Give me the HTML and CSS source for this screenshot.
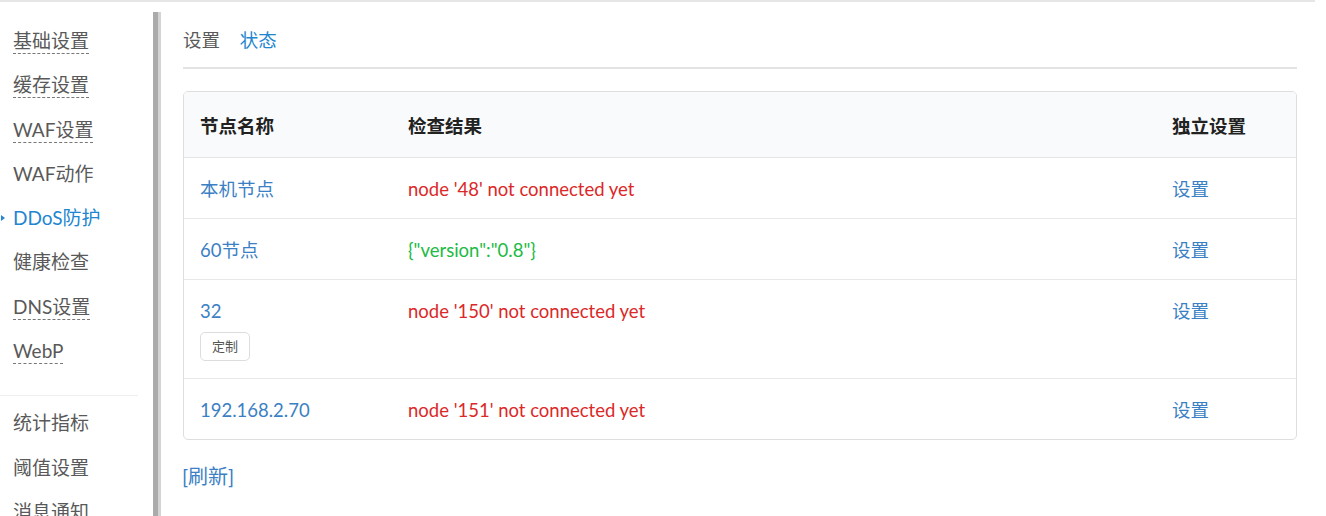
FILE: index.html
```html
<!doctype html>
<html>
<head>
<meta charset="utf-8">
<link rel="stylesheet" href="styles.css">
<title>DDoS防护 - 状态</title>
</head>
<body>
<div class="topline"></div>
<div class="layout">
  <div class="sidebar">
    <ul class="menu">
      <li><span class="dashed">基础设置</span></li>
      <li><span class="dashed">缓存设置</span></li>
      <li><span class="dashed">WAF设置</span></li>
      <li><span>WAF动作</span></li>
      <li class="active"><span>DDoS防护</span></li>
      <li><span>健康检查</span></li>
      <li><span class="dashed">DNS设置</span></li>
      <li><span class="dashed">WebP</span></li>
    </ul>
    <div class="menu-divider"></div>
    <ul class="menu">
      <li><span>统计指标</span></li>
      <li><span>阈值设置</span></li>
      <li><span>消息通知</span></li>
    </ul>
  </div>
  <div class="scroll-bar"></div>
  <div class="main">
    <div class="tabs">
      <a class="tab">设置</a>
      <a class="tab active">状态</a>
    </div>
    <table class="nodes">
      <thead>
        <tr>
          <th class="col-name">节点名称</th>
          <th>检查结果</th>
          <th class="col-op">独立设置</th>
        </tr>
      </thead>
      <tbody>
        <tr>
          <td><a class="link">本机节点</a></td>
          <td><span class="red">node '48' not connected yet</span></td>
          <td><a class="link">设置</a></td>
        </tr>
        <tr>
          <td><a class="link">60节点</a></td>
          <td><span class="green">{"version":"0.8"}</span></td>
          <td><a class="link">设置</a></td>
        </tr>
        <tr>
          <td><a class="link">32</a><span class="label">定制</span></td>
          <td><span class="red">node '150' not connected yet</span></td>
          <td><a class="link">设置</a></td>
        </tr>
        <tr>
          <td><a class="link">192.168.2.70</a></td>
          <td><span class="red">node '151' not connected yet</span></td>
          <td><a class="link">设置</a></td>
        </tr>
      </tbody>
    </table>
    <a class="refresh">[刷新]</a>
  </div>
</div>
</body>
</html>
```

FILE: styles.css
```css
body {
    margin: 0;
    font-family: Lato, "Noto Sans CJK SC", sans-serif;
    font-size: 18.5px;
    color: #555;
    background: white;
    overflow: hidden;
}
ul {
    list-style: none;
    margin: 0;
    padding: 0;
}
a {
    cursor: pointer;
}
.topline {
    width: 1315px;
    border-top: 2px solid #e6e6e6;
}
.layout {
    display: flex;
    align-items: flex-start;
}

/* sidebar */
.sidebar {
    width: 153px;
    padding-top: 17px;
}
.menu li {
    position: relative;
    height: 44.3px;
    line-height: 44px;
    padding-left: 13px;
    font-size: 19px;
    color: #595959;
    white-space: nowrap;
}
.menu .dashed {
    border-bottom: 1px dashed #777;
    padding-bottom: 1px;
}
.menu li.active {
    color: #2185d0;
}
.menu li.active:before {
    content: "";
    position: absolute;
    left: 1px;
    top: 19px;
    border-left: 4px solid #2185d0;
    border-top: 3px solid transparent;
    border-bottom: 3px solid transparent;
}
.menu-divider {
    width: 138px;
    border-top: 1px solid #eee;
    margin: 22px 0 5px;
}
.scroll-bar {
    width: 5px;
    height: 520px;
    margin-top: 10px;
    background: #ababab;
    border-right: 3px solid #d4d4d4;
}

/* main */
.main {
    width: 1114px;
    padding-left: 22px;
}
.tabs {
    padding-top: 26px;
    padding-bottom: 15px;
    border-bottom: 2px solid #e3e3e3;
    line-height: 24px;
}
.tab {
    color: #5a5a5a;
    margin-right: 15px;
}
.tab.active {
    color: #2185d0;
}
table.nodes {
    width: 100%;
    margin-top: 22px;
    border: 1px solid #dedede;
    border-radius: 5px;
    border-spacing: 0;
    border-collapse: separate;
    overflow: hidden;
}
.nodes th {
    background: #f9fafb;
    color: #222;
    font-weight: bold;
    text-align: left;
    height: 63px;
    padding: 2px 16px 0;
    line-height: 24px;
    border-bottom: 1px solid #e5e5e5;
}
.nodes th.col-name {
    width: 176px;
}
.nodes th.col-op {
    width: 108px;
}
.nodes td {
    vertical-align: top;
    padding: 19px 16px 17px;
    line-height: 24px;
    border-top: 1px solid #e8e8e8;
}
.nodes tbody tr:first-child td {
    border-top: none;
}
.link {
    color: #3b7fc4;
}
.red {
    color: #db2828;
}
.green {
    color: #21ba45;
}
.label {
    display: block;
    box-sizing: border-box;
    margin-top: 9px;
    width: 50px;
    height: 29px;
    line-height: 27px;
    text-align: center;
    font-size: 13px;
    color: #555;
    border: 1px solid #ddd;
    border-radius: 5px;
}
.refresh {
    display: inline-block;
    margin-top: 24px;
    line-height: 24px;
    font-size: 20px;
    color: #3b7fc4;
    margin-left: -1px;
}
```
